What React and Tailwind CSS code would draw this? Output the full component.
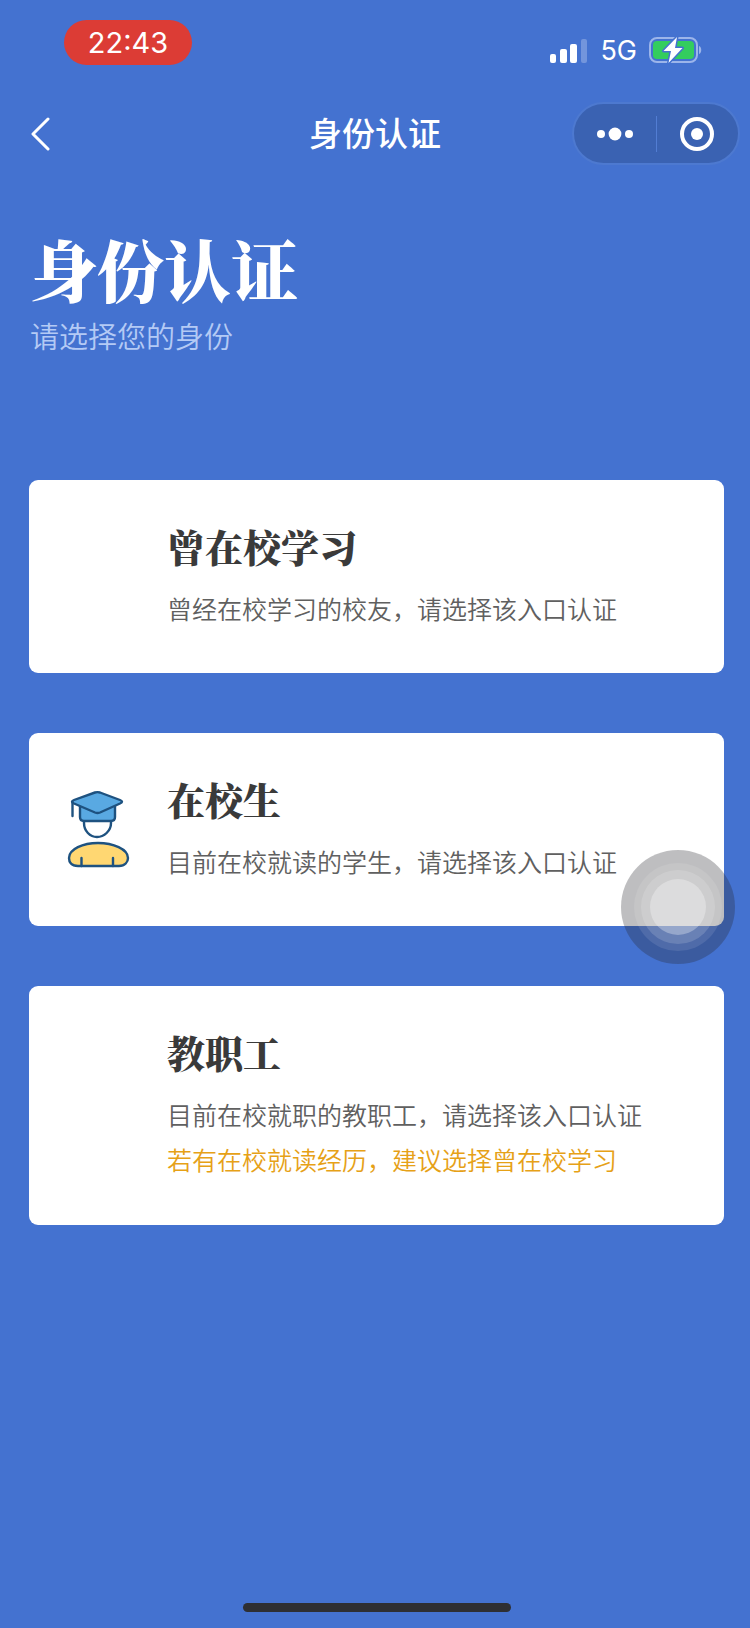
const sans = "font-['Inter','Noto_Sans_CJK_SC',sans-serif]"
const serif = "font-['Noto_Serif_CJK_SC','Liberation_Serif','Noto_Sans_CJK_SC',serif]"

const entries = [
    {
        id: 'alumni',
        title: '曾在校学习',
        desc: '曾经在校学习的校友，请选择该入口认证'
    },
    {
        id: 'student',
        title: '在校生',
        desc: '目前在校就读的学生，请选择该入口认证',
        icon: true
    },
    {
        id: 'staff',
        title: '教职工',
        desc: '目前在校就职的教职工，请选择该入口认证',
        note: '若有在校就读经历，建议选择曾在校学习'
    }
]

const SignalIcon = () => (
    <svg width="40" height="26" viewBox="0 0 40 26" fill="#fff" aria-hidden="true">
        <rect x="2" y="16" width="6" height="9" rx="2" />
        <rect x="12" y="11" width="7" height="14" rx="2" />
        <rect x="22" y="6" width="7" height="19" rx="2" />
        <rect x="33" y="1" width="6" height="24" rx="2" opacity="0.25" />
    </svg>
)

const BatteryIcon = () => (
    <svg width="54" height="30" viewBox="0 0 54 30" aria-hidden="true">
        <rect x="1" y="2" width="47" height="24" rx="7" fill="none" stroke="#9cb5ea" strokeWidth="2" />
        <path d="M50 10c3 1 3 7 0 8z" fill="#9cb5ea" />
        <rect x="4" y="5" width="41" height="18" rx="4" fill="#33cd5e" />
        <path
            d="M28 1 14.500 15h7.500L19.500 27 33.500 12H26z"
            fill="#fff"
            stroke="#4472d0"
            strokeWidth="3"
            strokeLinejoin="round"
            paintOrder="stroke"
        />
    </svg>
)

const StudentIcon = () => (
    <svg width="64" height="80" viewBox="0 0 64 80" fill="none" stroke="#1e5280" strokeWidth="2.400" strokeLinecap="round" strokeLinejoin="round" aria-hidden="true">
        {/* Face */}
        <path d="M18 31v3c0 8 6 14 13 14s14-6 14-14v-3" fill="#fff" />
        {/* Cap */}
        <path d="M14 15v13q0 4 4 4h27q4 0 4-4V15z" fill="#59a9e2" />
        <path d="M29 3.500q2.500-.8 5 0L54 11q4 1.500 0 3.500L34 23.500q-2.500 1-5 0L8 14.500q-4-2 0-3.500z" fill="#59a9e2" />
        <path d="M6.500 13v14" />
        {/* Shoulders */}
        <path d="M12 77C5 77 3 73 3 69c0-9 14-15 29-15s30 6 30 15c0 4-3 8-9 8z" fill="#ffd772" />
        <path d="M15.500 69v8M47 69v8" />
    </svg>
)

const EntryCard = ({ entry }) => (
    <button
        type="button"
        className="w-full bg-white rounded-[9px] pl-[37px] pr-6 pt-10 pb-[41px] flex items-start text-left cursor-pointer"
    >
        <span className="w-[101px] h-[108px] shrink-0 flex items-end">
            {entry.icon && (
                <span className="pb-3">
                    <StudentIcon />
                </span>
            )}
        </span>
        <span className="flex-1 min-w-0 flex flex-col">
            <span className={`${serif} text-[38px] leading-[52px] font-black text-[#3a3a3a]`}>{entry.title}</span>
            <span className="mt-4 text-[25px] leading-[44px] font-[350] text-[#606060]">{entry.desc}</span>
            {entry.note && (
                <span className="text-[25px] leading-[46px] font-[350] text-[#e6a117]">{entry.note}</span>
            )}
        </span>
    </button>
)

const App = () => {
    return (
        <div className={`${sans} relative min-h-screen bg-[#4472d0] flex flex-col`}>
            {/* Status bar */}
            <div className="pl-16 pr-[47px] pt-5 flex items-start justify-between text-white">
                <span className="w-32 h-[45px] rounded-full bg-[#dc3c35] text-[29px] leading-[46px] text-center">22:43</span>
                <div className="pt-4 flex items-center">
                    <SignalIcon />
                    <span className="ml-3 mr-3 text-[27px] leading-[30px]">5G</span>
                    <BatteryIcon />
                </div>
            </div>

            {/* Navigation bar */}
            <header className="mt-9 px-[10px] grid grid-cols-[1fr_auto_1fr] items-center text-white">
                <button type="button" aria-label="返回" className="justify-self-start ml-5 cursor-pointer">
                    <svg width="20" height="34" viewBox="0 0 20 34" fill="none" stroke="#fff" strokeWidth="3" strokeLinecap="round" strokeLinejoin="round">
                        <path d="M18 2 3 17l15 15" />
                    </svg>
                </button>
                <div className="text-[33px] leading-[48px] font-medium">身份认证</div>
                <div className="justify-self-end w-[168px] h-[63px] rounded-full border-2 border-[#4d79d0] bg-[#3a62b2] flex items-center">
                    <button type="button" aria-label="更多" className="flex-1 flex justify-center cursor-pointer">
                        <svg width="38" height="14" viewBox="0 0 38 14" fill="#fff">
                            <circle cx="5" cy="7" r="4" />
                            <circle cx="19" cy="7" r="6.400" />
                            <circle cx="33" cy="7" r="4" />
                        </svg>
                    </button>
                    <span className="w-px h-9 bg-[#527dd3]"></span>
                    <button type="button" aria-label="关闭" className="flex-1 flex justify-center cursor-pointer">
                        <svg width="36" height="36" viewBox="0 0 36 36">
                            <circle cx="18" cy="18" r="15" fill="none" stroke="#fff" strokeWidth="4" />
                            <circle cx="18" cy="18" r="6" fill="#fff" />
                        </svg>
                    </button>
                </div>
            </header>

            {/* Page heading */}
            <div className="px-[30px] pt-[58px] text-white">
                <h1 className={`${serif} text-[67px] leading-[90px] font-black`}>身份认证</h1>
                <p className="mt-1 text-[29px] leading-[42px] font-[350] text-[#b4caf5]">请选择您的身份</p>
            </div>

            {/* Identity entries */}
            <main className="pl-[29px] pr-[26px] pt-[121px] flex flex-col gap-[60px]">
                {entries.map(entry => (
                    <EntryCard key={entry.id} entry={entry} />
                ))}
            </main>

            {/* Floating touch button */}
            <button
                type="button"
                aria-label="辅助触控"
                className="absolute right-[15px] top-[850px] size-[114px] rounded-full bg-[#2828304d] flex items-center justify-center cursor-pointer"
            >
                <span className="size-[88px] rounded-full bg-white/10 flex items-center justify-center">
                    <span className="size-[74px] rounded-full bg-white/15 flex items-center justify-center">
                        <span className="size-[56px] rounded-full bg-white/30"></span>
                    </span>
                </span>
            </button>

            {/* Home indicator */}
            <div className="mt-auto pl-1 pb-4 flex justify-center">
                <div className="w-[268px] h-[9px] rounded-full bg-[#2e2f33]"></div>
            </div>
        </div>
    )
}

export default App
